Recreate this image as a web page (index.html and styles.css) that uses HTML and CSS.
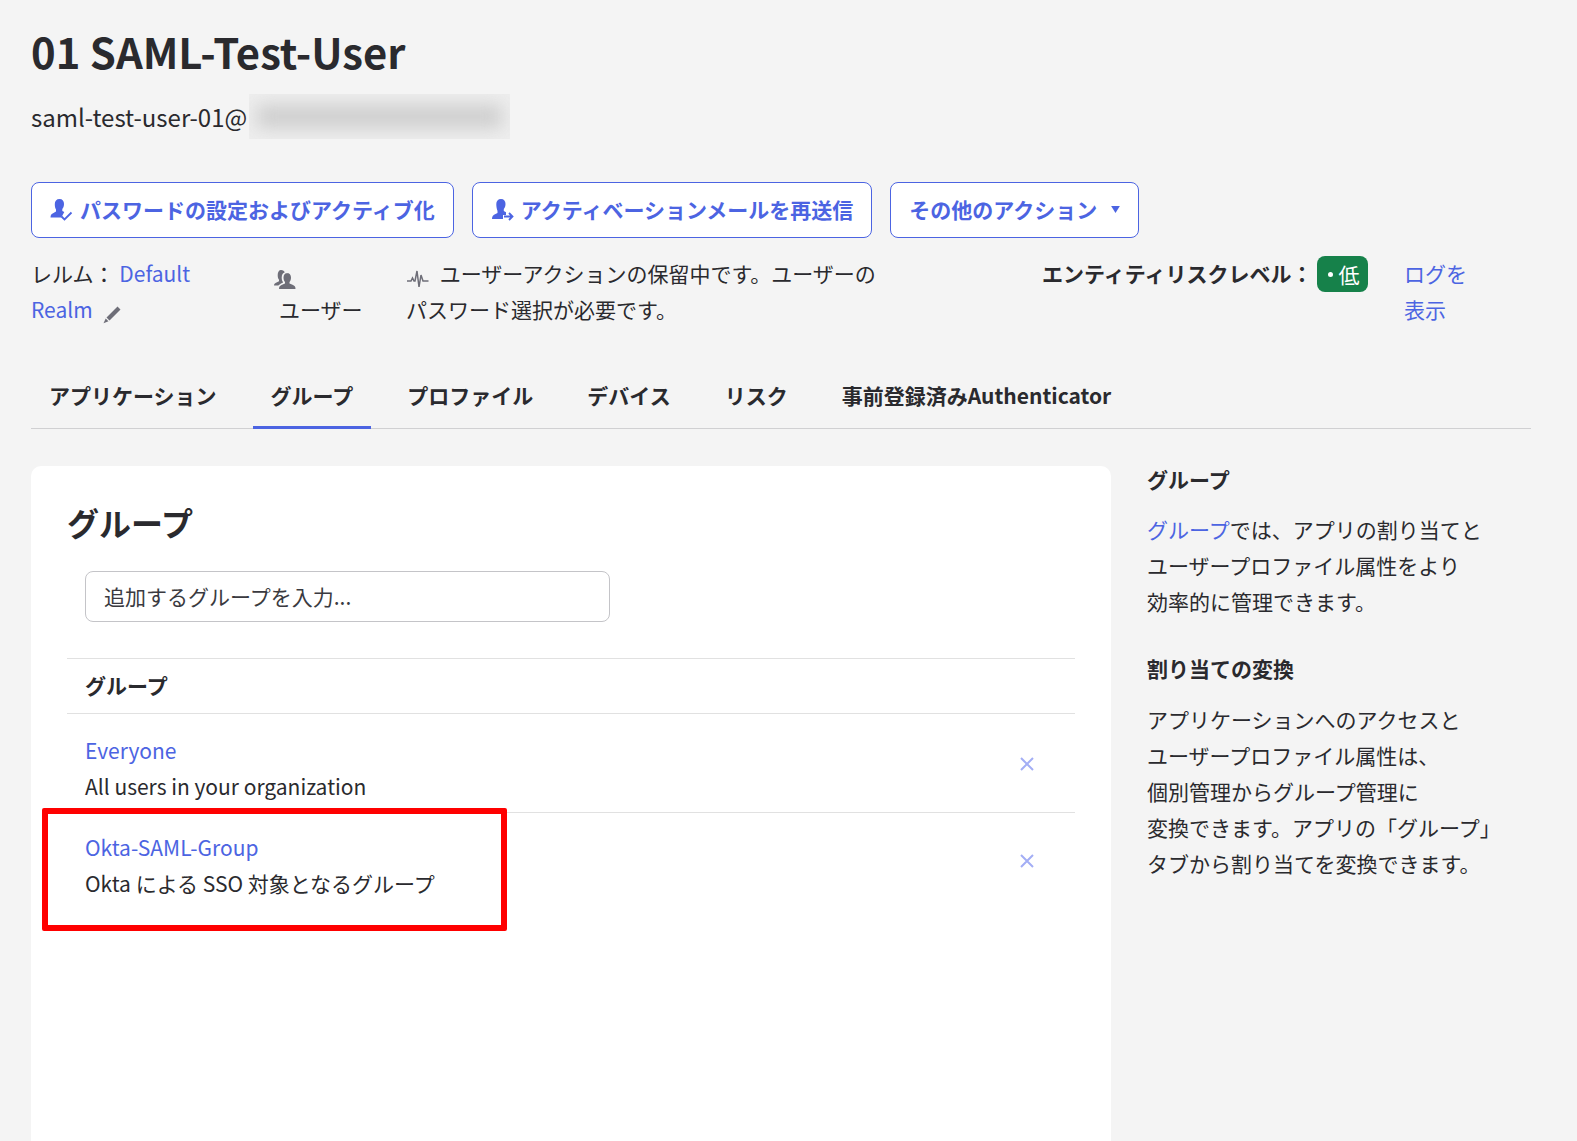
FILE: index.html
```html
<!DOCTYPE html>
<html lang="ja">
<head>
<meta charset="utf-8">
<title>01 SAML-Test-User</title>
<link rel="stylesheet" href="styles.css">
</head>
<body>
<main class="page">
  <h1 class="title">01 SAML-Test-User</h1>
  <div class="email"><span>saml-test-user-01@</span><span class="redact"><span class="redact-blur"></span></span></div>

  <div class="actions">
    <button class="btn">
      <svg class="btn-icon" viewBox="0 0 24 24"><path d="M9.500 1c3 0 4.500 2 4.500 5 0 2.200-.7 4-1.700 5v2l2 1-3 5.500H.5c0-2.500 1-3.700 3-4.500L6 13.500v-2C5 10 4.800 8 4.800 6c0-3 1.700-5 4.700-5z" fill="#4c64e2"/><path d="M11.500 18.500l3 3 7-7" fill="none" stroke="#4c64e2" stroke-width="1.800"/></svg>
      パスワードの設定およびアクティブ化
    </button>
    <button class="btn">
      <svg class="btn-icon" viewBox="0 0 24 24"><path d="M10 1c3 0 4.500 2 4.500 5 0 2.200-.7 4-1.700 5v2l2.200 1.200v2.800h-3v4H1c0-2.800 1-4 3-4.800l2.500-1.200v-2C5.500 10 5.300 8 5.300 6c0-3 1.700-5 4.700-5z" fill="#4c64e2"/><path d="M13 18.500h8M18 15l3.500 3.500L18 22" fill="none" stroke="#4c64e2" stroke-width="1.800"/></svg>
      アクティベーションメールを再送信
    </button>
    <button class="btn">
      その他のアクション
      <svg class="caret" viewBox="0 0 10 8"><path d="M0 0h10L5 8z" fill="#4c64e2"/></svg>
    </button>
  </div>

  <div class="meta">
    <div class="meta-realm">レルム： <a class="link" href="#">Default Realm</a>
      <svg class="pencil" viewBox="0 0 20 20"><path d="M15.500 1.500l3 3L7.500 15.500l-3-3zM3.700 13.500l2.800 2.800-5 2z" fill="#6e6e78"/></svg>
    </div>
    <div class="meta-user">
      <svg class="user-icon" viewBox="0 0 24 22"><path d="M8 1c2 0 3.500 1 3.700 2.500-1.700.5-3 2-3 5 0 2 .5 3.500 1.300 4.500v.6l-2 1-2.700 2H1c0-1.500.9-2.200 2-2.800l3-1.500v-1.500C5 9.500 4.700 8 4.700 6c0-3 1.300-5 3.300-5z" fill="#6e6e78"/><path d="M14 4c2.500 0 4 1.800 4 4.500 0 2-.7 3.500-1.500 4.500v1.500l3 1.300c2 .9 3 1.700 3 4.200H6c0-2.500 1-3.300 3-4.200l3-1.300V13c-.8-1-1.500-2.500-1.500-4.500 0-2.700 1.500-4.500 4-4.500z" fill="#6e6e78"/></svg>
      <span class="user-label">ユーザー</span>
    </div>
    <div class="meta-status">
      <svg class="pulse" viewBox="0 0 24 18"><path d="M1 11h4l1.500-3L8 11h1l2-10 2 16 2-12 2 6h5.500" fill="none" stroke="#6e6e78" stroke-width="1.500"/></svg>
      ユーザーアクションの保留中です。ユーザーのパスワード選択が必要です。
    </div>
    <div class="meta-risk">エンティティリスクレベル：<span class="badge"><span class="dot"></span>低</span></div>
    <a class="link meta-log" href="#">ログを表示</a>
  </div>

  <nav class="tabs">
    <a class="tab" href="#">アプリケーション</a>
    <a class="tab tab-active" href="#">グループ</a>
    <a class="tab" href="#">プロファイル</a>
    <a class="tab" href="#">デバイス</a>
    <a class="tab" href="#">リスク</a>
    <a class="tab" href="#">事前登録済みAuthenticator</a>
  </nav>

  <div class="content">
    <section class="card">
      <h2 class="card-title">グループ</h2>
      <div class="search">追加するグループを入力...</div>
      <div class="table-head">グループ</div>
      <div class="row">
        <div class="row-text">
          <a class="link" href="#">Everyone</a>
          <div>All users in your organization</div>
        </div>
        <svg class="remove" viewBox="0 0 14 14"><path d="M1 1l12 12M13 1L1 13" stroke="#a3aef5" stroke-width="2" fill="none"/></svg>
      </div>
      <div class="row row-last">
        <div class="row-text">
          <a class="link" href="#">Okta-SAML-Group</a>
          <div>Okta による SSO 対象となるグループ</div>
        </div>
        <svg class="remove" viewBox="0 0 14 14"><path d="M1 1l12 12M13 1L1 13" stroke="#a3aef5" stroke-width="2" fill="none"/></svg>
      </div>
      <div class="highlight"></div>
    </section>

    <aside class="side">
      <h3 class="side-title">グループ</h3>
      <p class="side-text"><a class="link" href="#">グループ</a>では、アプリの割り当てと<br>ユーザープロファイル属性をより<br>効率的に管理できます。</p>
      <h3 class="side-title side-title-next">割り当ての変換</h3>
      <p class="side-text">アプリケーションへのアクセスと<br>ユーザープロファイル属性は、<br>個別管理からグループ管理に<br>変換できます。アプリの「グループ」<br>タブから割り当てを変換できます。</p>
    </aside>
  </div>
</main>
</body>
</html>
```

FILE: styles.css
```css
* { box-sizing: border-box; }
html, body { margin: 0; height: 1141px; overflow: hidden; }
body {
  background: #f4f4f4;
  color: #2a2a2e;
  font-family: "Noto Sans CJK JP", "Noto Sans", sans-serif;
  font-size: 21px;
  line-height: 36px;
}
.page { padding: 22px 46px 0 31px; }
.link { color: #4c64e2; text-decoration: none; }

.title { margin: 0; font-size: 41.8px; line-height: 58px; font-weight: 700; color: #2a2a2e; }
.email { display: flex; align-items: center; height: 45px; margin-top: 14px; font-size: 24px; }
.redact { position: relative; display: block; width: 261px; height: 45px; margin-left: 2px; overflow: hidden; background: #eeeeee; }
.redact-blur { position: absolute; left: 8px; right: 8px; top: 11px; bottom: 11px; background: #cdcdcd; filter: blur(9px); }

.actions { display: flex; gap: 18px; margin-top: 43px; }
.btn {
  display: flex; align-items: center; height: 56px; padding: 0 18px 2px;
  background: #fff; border: 1px solid #4c64e2; border-radius: 8px;
  color: #4c64e2; font: inherit; font-weight: 700;
}
.btn-icon { width: 24px; height: 24px; margin-right: 6px; margin-top: 2px; }
.caret { width: 9px; height: 7px; margin-left: 14px; }

.meta { display: flex; margin-top: 17px; }
.meta-realm { width: 243px; padding-right: 40px; }
.pencil { width: 20px; height: 20px; margin-left: 5px; vertical-align: -7px; }
.meta-user { width: 132px; }
.user-icon { display: block; width: 24px; height: 22px; margin: 14px 0 0 -1px; }
.user-label { display: block; margin-left: 5px; }
.meta-status { width: 636px; padding-right: 160px; }
.pulse { width: 24px; height: 18px; margin-right: 5px; vertical-align: -6px; }
.meta-risk { display: flex; align-items: flex-start; width: 362px; font-weight: 700; }
.badge { display: flex; align-items: center; height: 36px; margin-top: 1px; margin-left: 5px; padding: 0 9px 0 11px; background: #16814a; border-radius: 8px; color: #fff; font-weight: 400; }
.dot { width: 5px; height: 5px; margin-right: 5px; border-radius: 50%; background: #fff; }
.meta-log { width: 70px; }

.tabs { display: flex; gap: 18px; height: 66px; margin-top: 36px; border-bottom: 1px solid #d0d0d2; }
.tab { height: 66px; padding: 14px 18px 0; color: #2a2a2e; font-weight: 700; text-decoration: none; }
.tab-active { border-bottom: 3px solid #4c64e2; }

.content { display: flex; gap: 36px; margin-top: 37px; }
.card { position: relative; flex: none; width: 1080px; height: 720px; padding: 32px 36px; background: #fff; border-radius: 10px; }
.card-title { margin: 0; font-size: 32px; line-height: 48px; font-weight: 700; color: #2a2a2e; }
.search {
  width: 525px; height: 51px; margin: 25px 0 36px 18px; padding: 6px 18px;
  border: 1px solid #c4c4c8; border-radius: 8px; color: #3a3a40;
}
.table-head { height: 56px; padding: 8px 18px; border-top: 1px solid #e1e1e1; border-bottom: 1px solid #e1e1e1; font-weight: 700; }
.row { display: flex; align-items: center; justify-content: space-between; height: 99px; padding: 0 41px 0 18px; border-bottom: 1px solid #e1e1e1; }
.row-text { align-self: flex-start; padding-top: 17.5px; }
.row-last { height: 96px; border-bottom: 0; }
.row-last .row-text { padding-top: 16px; }
.remove { width: 14px; height: 14px; margin-top: 2px; }
.row-last .remove { margin-top: 0; }
.highlight { position: absolute; left: 11px; top: 342px; width: 465px; height: 123px; border: 6px solid #ff0000; border-radius: 2px; }

.side { flex: 1; min-width: 0; }
.side-title { margin: -5px 0 14px; font-size: 21px; line-height: 36px; font-weight: 700; }
.side-title-next { margin-bottom: 15px; }
.side-text { margin: 0 0 36px; }
```
